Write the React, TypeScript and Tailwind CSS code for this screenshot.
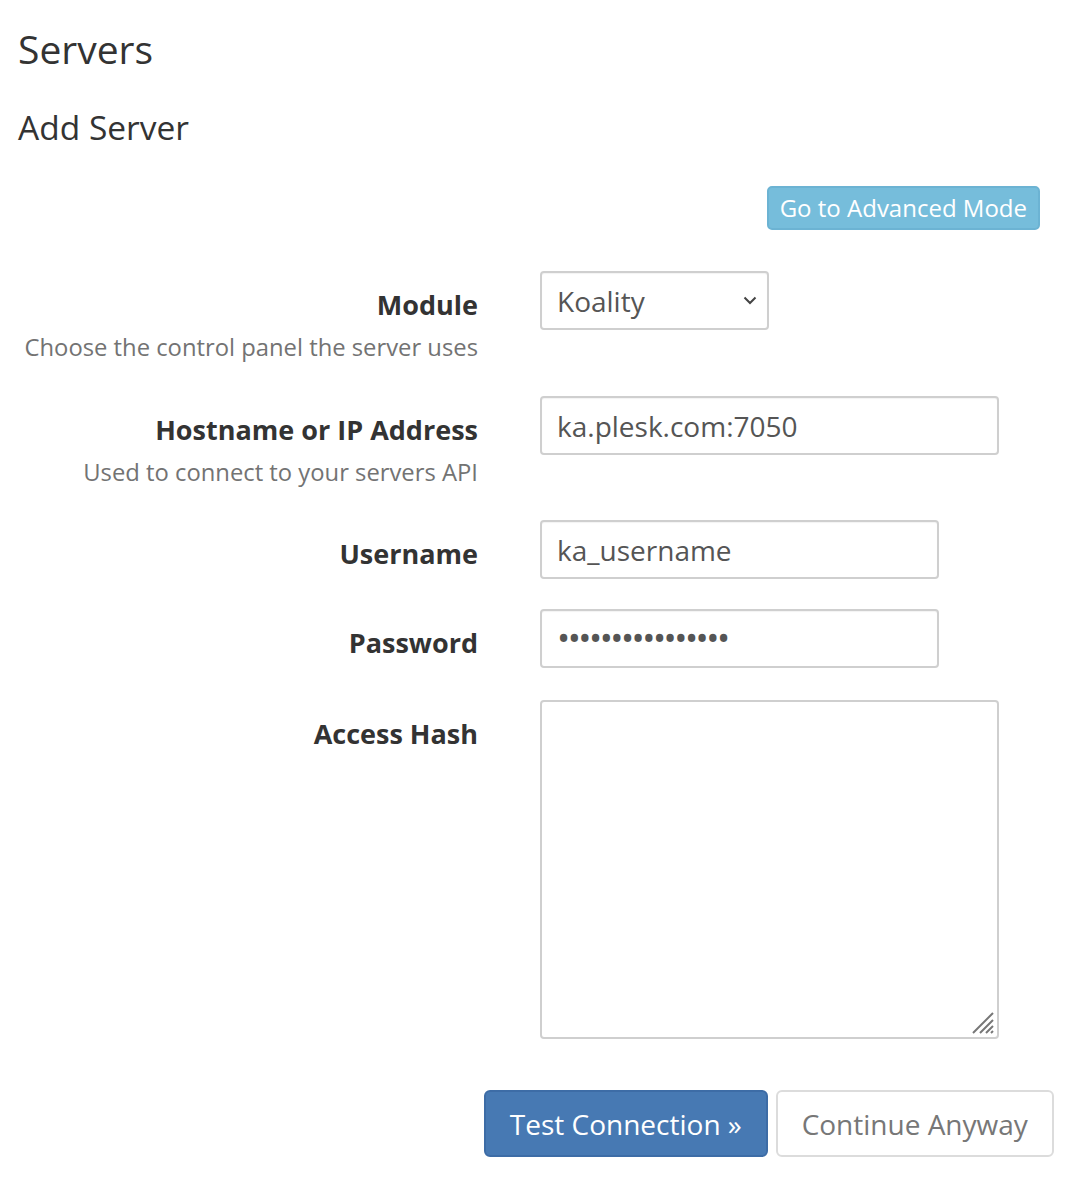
import React from "react";

const label = "text-[27px] font-bold text-[#333] leading-[36px]";
const help = "text-[23.8px] text-[#737373] leading-[32px] mt-[8px]";
const input =
  "h-[59px] rounded-[4px] border-2 border-[#cfcfcf] bg-white px-[15px] text-[28px] text-[#555] outline-none shadow-[inset_0_1px_1px_rgba(0,0,0,0.05)]";

const Row = ({
  title,
  hint,
  children,
  className = "",
}: {
  title: string;
  hint?: string;
  children: React.ReactNode;
  className?: string;
}) => (
  <div className={`flex ${className}`}>
    <div className="w-[460px] shrink-0 text-right pt-[16px]">
      <div className={label}>{title}</div>
      {hint && <div className={help}>{hint}</div>}
    </div>
    <div className="ml-[62px] flex-1">{children}</div>
  </div>
);

export default function App() {
  return (
    <div className="min-h-screen bg-white font-['Open_Sans',sans-serif] text-[#333]">
      <div className="pl-[18px] pr-[38px] pt-[23px]">
        <h1 className="text-[39px] leading-[52px]">Servers</h1>
        <h2 className="mt-[30px] text-[33.5px] leading-[44px]">Add Server</h2>

        <div className="mt-[37px] flex justify-end pr-[14px]">
          <button className="h-[44px] rounded-[5px] border-2 border-[#6cb3d3] bg-[#76bddb] px-[11px] text-[24px] text-white leading-none">
            Go to Advanced Mode
          </button>
        </div>

        <div className="mt-[41px]">
          <Row title="Module" hint="Choose the control panel the server uses">
            <div className={`${input} w-[229px] flex items-center justify-between pr-[10px]`}>
              <span>Koality</span>
              <svg width="14" height="9" viewBox="0 0 14 9" fill="none">
                <path d="M1.5 1.5 7 7l5.5-5.5" stroke="#444" strokeWidth="2" />
              </svg>
            </div>
          </Row>

          <Row title="Hostname or IP Address" hint="Used to connect to your servers API" className="mt-[33px]">
            <div className={`${input} w-[459px] flex items-center`}>ka.plesk.com:7050</div>
          </Row>

          <Row title="Username" className="mt-[32px]">
            <div className={`${input} w-[399px] flex items-center`}>ka_username</div>
          </Row>

          <Row title="Password" className="mt-[30px]">
            <div className={`${input} w-[399px] flex items-center`}>
              <span className="-mt-[2px] text-[35px] leading-none tracking-[-2.5px] text-[#555]">
                ••••••••••••••••
              </span>
            </div>
          </Row>

          <Row title="Access Hash" className="mt-[32px]">
            <div className="relative h-[339px] w-[459px] rounded-[4px] border-2 border-[#cfcfcf] bg-white">
              <svg className="absolute bottom-[2px] right-[2px]" width="26" height="26" viewBox="0 0 26 26">
                <path d="M24 4 4 24M24 11 11 24M24 17 17 24M24 22 22 24" stroke="#777" strokeWidth="2" />
              </svg>
            </div>
          </Row>
        </div>

        <div className="mt-[51px] flex pl-[466px] gap-[8px]">
          <button className="h-[67px] w-[284px] rounded-[6px] border-2 border-[#3d6ca6] bg-[#4779b3] text-[28px] text-white">
            Test Connection »
          </button>
          <button className="h-[67px] w-[279px] rounded-[6px] border-2 border-[#dcdcdc] bg-white text-[28px] text-[#777]">
            Continue Anyway
          </button>
        </div>
      </div>
    </div>
  );
}
